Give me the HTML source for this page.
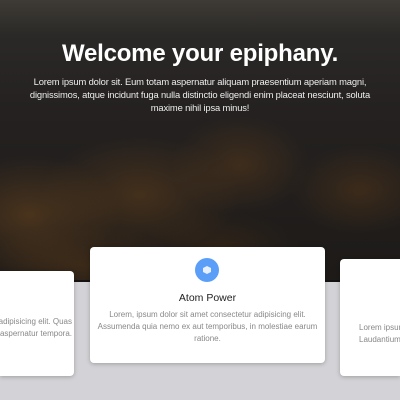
<!DOCTYPE html>
<html><head><style>
*{margin:0;padding:0;box-sizing:border-box}
html,body{width:400px;height:400px;overflow:hidden}
body{background:#d3d2d6;font-family:"Liberation Sans",sans-serif;position:relative}
.wrap{position:absolute;left:0;top:0;width:400px;height:400px;overflow:hidden}
.hero{position:absolute;left:0;top:0;width:400px;height:282px;
background:
radial-gradient(ellipse 90px 60px at 30px 215px,rgba(115,74,30,.5),transparent),
radial-gradient(ellipse 100px 60px at 140px 195px,rgba(110,70,28,.45),transparent),
radial-gradient(ellipse 70px 50px at 240px 165px,rgba(105,66,26,.4),transparent),
radial-gradient(ellipse 70px 45px at 360px 190px,rgba(100,62,24,.4),transparent),
radial-gradient(ellipse 100px 40px at 80px 265px,rgba(95,60,24,.45),transparent),
radial-gradient(ellipse 80px 40px at 220px 250px,rgba(80,50,20,.35),transparent),
linear-gradient(#3e3b36 0px,#2b2927 35px,#242120 110px,#1d1a18 282px);
border-bottom:2px solid #151312}
h1{position:absolute;top:40px;left:0;width:400px;text-align:center;color:#fff;font-size:24px;font-weight:bold;letter-spacing:-0.2px}
.sub{position:absolute;top:75px;left:15px;width:370px;text-align:center;color:#eee;font-size:9.4px;line-height:13px;letter-spacing:-0.15px}
.card{position:absolute;background:#fff;border-radius:4px;box-shadow:0 1px 4px rgba(0,0,0,.25);text-align:center;overflow:hidden}
.c2{left:90px;top:247px;width:235px;height:116px}
.ic{position:absolute;left:105px;top:11px;width:24px;height:24px;border-radius:50%;background:#5a9ef8}
.ic:after{content:"";position:absolute;left:8px;top:8px;width:8px;height:8px;background:#e6f0ff;clip-path:polygon(50% 0,100% 25%,100% 75%,50% 100%,0 75%,0 25%)}
.t{position:absolute;top:45px;width:100%;font-size:10.5px;color:#222}
.p{position:absolute;top:62px;left:6px;right:6px;font-size:8px;line-height:12px;color:#888}
</style></head><body><div class="wrap">
<div class="hero"></div>
<h1>Welcome your epiphany.</h1>
<div class="sub">Lorem ipsum dolor sit. Eum totam aspernatur aliquam praesentium aperiam magni, dignissimos, atque incidunt fuga nulla distinctio eligendi enim placeat nesciunt, soluta maxime nihil ipsa minus!</div>
<div class="card" style="left:0;top:271px;width:74px;height:105px;border-radius:0 4px 4px 0"><div class="p" style="top:45px;left:auto;right:2px;width:240px;text-align:right">Lorem, ipsum dolor sit amet consectetur adipisicing elit. Quas<br>Illum aspernatur tempora.</div></div>
<div class="card c2"><div class="ic"></div><div class="t">Atom Power</div><div class="p">Lorem, ipsum dolor sit amet consectetur adipisicing elit. Assumenda quia nemo ex aut temporibus, in molestiae earum ratione.</div></div>
<div class="card" style="left:340px;top:259px;width:60px;height:117px;border-radius:4px 0 0 4px"><div class="p" style="top:63px;left:19px;right:auto;text-align:left;width:240px">Lorem ipsum dolor sit amet<br>Laudantium quia nemo</div></div>
</div></body></html>
